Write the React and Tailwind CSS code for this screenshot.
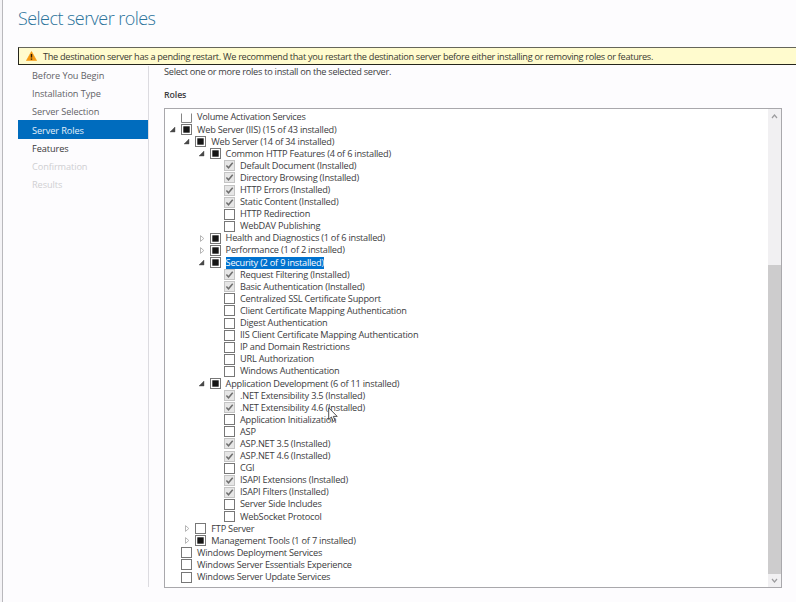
import React from "react";

const STEPS = [
  ["Before You Begin", "text-[#626266]"],
  ["Installation Type", "text-[#626266]"],
  ["Server Selection", "text-[#626266]"],
  ["Server Roles", "bg-[#006cbe] text-[#e4f0fa]"],
  ["Features", "text-[#38383a]"],
  ["Confirmation", "text-[#cfcfd2]"],
  ["Results", "text-[#cfcfd2]"],
];

// [depth, state, label, expander, selected]
const ROLES = [
  [0, "clipped", "Volume Activation Services"],
  [0, "partial", "Web Server (IIS) (15 of 43 installed)", "open"],
  [1, "partial", "Web Server (14 of 34 installed)", "open"],
  [2, "partial", "Common HTTP Features (4 of 6 installed)", "open"],
  [3, "on", "Default Document (Installed)"],
  [3, "on", "Directory Browsing (Installed)"],
  [3, "on", "HTTP Errors (Installed)"],
  [3, "on", "Static Content (Installed)"],
  [3, "off", "HTTP Redirection"],
  [3, "off", "WebDAV Publishing"],
  [2, "partial", "Health and Diagnostics (1 of 6 installed)", "closed"],
  [2, "partial", "Performance (1 of 2 installed)", "closed"],
  [2, "partial", "Security (2 of 9 installed)", "open", true],
  [3, "on", "Request Filtering (Installed)"],
  [3, "on", "Basic Authentication (Installed)"],
  [3, "off", "Centralized SSL Certificate Support"],
  [3, "off", "Client Certificate Mapping Authentication"],
  [3, "off", "Digest Authentication"],
  [3, "off", "IIS Client Certificate Mapping Authentication"],
  [3, "off", "IP and Domain Restrictions"],
  [3, "off", "URL Authorization"],
  [3, "off", "Windows Authentication"],
  [2, "partial", "Application Development (6 of 11 installed)", "open"],
  [3, "on", ".NET Extensibility 3.5 (Installed)"],
  [3, "on", ".NET Extensibility 4.6 (Installed)"],
  [3, "off", "Application Initialization"],
  [3, "off", "ASP"],
  [3, "on", "ASP.NET 3.5 (Installed)"],
  [3, "on", "ASP.NET 4.6 (Installed)"],
  [3, "off", "CGI"],
  [3, "on", "ISAPI Extensions (Installed)"],
  [3, "on", "ISAPI Filters (Installed)"],
  [3, "off", "Server Side Includes"],
  [3, "off", "WebSocket Protocol"],
  [1, "off", "FTP Server", "closed"],
  [1, "partial", "Management Tools (1 of 7 installed)", "closed"],
  [0, "off", "Windows Deployment Services"],
  [0, "off", "Windows Server Essentials Experience"],
  [0, "off", "Windows Server Update Services"],
];

const INDENT = ["pl-[4px]", "pl-[18.3px]", "pl-[32.6px]", "pl-[47px]"];

function Expander({ kind }) {
  return (
    <svg className="h-[7px] w-[12px] shrink-0" viewBox="0 0 12 7">
      {kind === "open" && <path d="M6 1V6H1Z" fill="#4a4a4a" stroke="#4a4a4a" strokeWidth=".4" />}
      {kind === "closed" && (
        <path d="M2.5 .6V6.4L5.8 3.5Z" fill="#fff" stroke="#a4a4a4" strokeWidth=".8" />
      )}
    </svg>
  );
}

function Box({ state }) {
  if (state === "on")
    return (
      <svg className="size-[11px] shrink-0" viewBox="0 0 11 11">
        <rect x=".5" y=".5" width="10" height="10" fill="#e6e6e6" stroke="#c4c4c4" />
        <path d="M2.4 5.6L4.5 7.8L8.7 2.8" fill="none" stroke="#6e6e6e" strokeWidth="1.5" />
      </svg>
    );
  if (state === "clipped")
    return (
      <svg className="size-[11px] shrink-0" viewBox="0 0 11 11">
        <path d="M.5 1.5V10.5H10.5V1.5" fill="none" stroke="#858585" />
      </svg>
    );
  return (
    <svg className="size-[11px] shrink-0" viewBox="0 0 11 11">
      <rect x=".5" y=".5" width="10" height="10" fill="#fff" stroke="#777" />
      {state === "partial" && <rect x="2.3" y="2.3" width="6.4" height="6.4" fill="#161616" />}
    </svg>
  );
}

function Row({ item }) {
  const [depth, state, label, expander, selected] = item;
  return (
    <div className={`flex h-[12.105px] items-center ${INDENT[depth]}`}>
      <Expander kind={expander} />
      <Box state={state} />
      <span
        className={`ml-[5px] h-[12px] whitespace-nowrap leading-[12px] tracking-[-0.225px] ${
          selected ? "bg-[#0072cf] text-white" : ""
        }`}
      >
        {label}
      </span>
    </div>
  );
}

export default function App() {
  return (
    <div className="relative flex h-[602px] w-[796px] overflow-hidden bg-[#fdfcfe] font-['Open_Sans','Noto_Sans',sans-serif] text-[9.2px] text-[#3c3c3e]">
      <div className="w-[3px] shrink-0 border-r border-[#b9b8bc] bg-[#f4f3f6]" />
      <div className="flex min-w-0 grow flex-col pl-[15px]">
        <h1 className="h-[47px] pt-[5px] text-[18px] font-light leading-[26px] tracking-[-0.56px] text-[#2b739b]">
          Select server roles
        </h1>
        <div className="flex h-[18px] shrink-0 items-center border-y border-l border-[#25251c] border-t-[#65655a] bg-[#fffbce] text-[#3a3a31]">
          <svg className="ml-[7px] h-[10px] w-[11px]" viewBox="0 0 11 10">
            <path d="M5.5 .5L10.6 9.6H.4Z" fill="#f59a13" stroke="#f59a13" strokeWidth=".6" strokeLinejoin="round" />
            <path d="M5.5 3V6.6M5.5 7.4V8.8" stroke="#2d2109" strokeWidth="1.4" />
          </svg>
          <span className="ml-[6px] whitespace-nowrap pt-px tracking-[-0.302px]">
            The destination server has a pending restart. We recommend that you restart the destination server before either installing or removing roles or features.
          </span>
        </div>
        <div className="flex grow">
          <nav className="mb-[15px] mt-px w-[131px] shrink-0 border-r border-[#dcdbe0] tracking-[-0.09px]">
            {STEPS.map(([label, tone]) => (
              <div key={label} className={`flex h-[18.15px] items-center pl-[14px] pt-[2px] ${tone}`}>
                {label}
              </div>
            ))}
          </nav>
          <main className="flex grow flex-col pl-[15px] pr-[14px]">
            <p className="h-[24px] leading-[13px] tracking-[-0.27px]">Select one or more roles to install on the selected server.</p>
            <h2 className="h-[19px] text-[8.8px] font-semibold leading-[12px] tracking-[-0.1px]">Roles</h2>
            <div className="flex h-[480px] border border-[#a9a8ac] bg-white">
              <div className="min-w-0 grow overflow-hidden pt-[2.4px]">
                {ROLES.map((item) => (
                  <Row key={item[2]} item={item} />
                ))}
              </div>
              <div className="flex w-[13px] shrink-0 flex-col bg-[#f1f0f2]">
                <svg className="h-[14px] w-[13px]" viewBox="0 0 13 14">
                  <path d="M4 9L6.5 6L9 9" fill="none" stroke="#9c9c9e" strokeWidth="1.2" />
                </svg>
                <div className="h-[142px]" />
                <div className="grow bg-[#cdcccd]" />
                <svg className="h-[13px] w-[13px]" viewBox="0 0 13 13">
                  <path d="M4 5L6.5 8L9 5" fill="none" stroke="#9c9c9e" strokeWidth="1.2" />
                </svg>
              </div>
            </div>
          </main>
        </div>
      </div>
      <svg className="absolute left-[328px] top-[407px] h-[16px] w-[10px]" viewBox="0 0 10 16">
        <path d="M.7 .8V12.5L3.4 10L5.2 14.4L7.1 13.6L5.3 9.4H9.2Z" fill="#fff" stroke="#3d3d40" strokeWidth=".9" />
      </svg>
    </div>
  );
}
